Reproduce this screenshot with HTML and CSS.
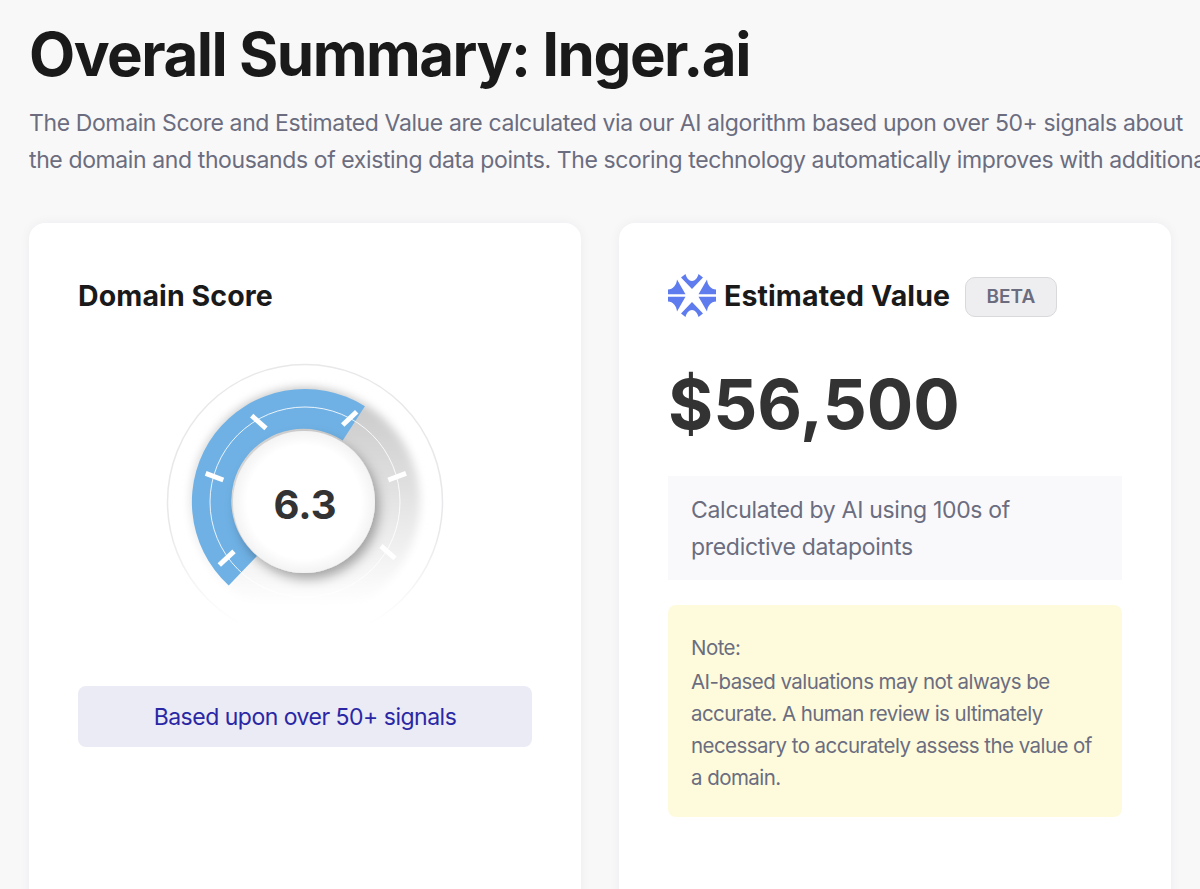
FILE: index.html
```html
<!DOCTYPE html>
<html lang="en">
<head>
    <meta charset="UTF-8">
    <meta name="viewport" content="width=device-width, initial-scale=1.0">
    <title>Overall Summary: Inger.ai</title>
    <link rel="stylesheet" href="styles.css">
</head>
<body>
    <main class="summary">
        <h1>Overall Summary: Inger.ai</h1>
        <p class="intro">The Domain Score and Estimated Value are calculated via our AI algorithm based upon over 50+ signals about<br>the domain and thousands of existing data points. The scoring technology automatically improves with additional data.</p>

        <div class="cards">
            <section class="card">
                <h2>Domain Score</h2>
                <div class="gauge">
                    <svg class="gauge-art" viewBox="0 0 280 280" width="280" height="280">
                        <defs>
                            <linearGradient id="rimFade" x1="0" y1="0" x2="0" y2="1">
                                <stop offset="0.6" stop-color="#e8e8ea"/>
                                <stop offset="0.95" stop-color="#ffffff"/>
                            </linearGradient>
                            <linearGradient id="trackFade" x1="0" y1="0" x2="0" y2="1">
                                <stop offset="0" stop-color="#c6c6c6"/>
                                <stop offset="0.5" stop-color="#e4e4e4"/>
                                <stop offset="0.8" stop-color="#f6f6f6"/>
                                <stop offset="0.95" stop-color="#ffffff"/>
                            </linearGradient>
                            <radialGradient id="discFill">
                                <stop offset="0.8" stop-color="#ffffff"/>
                                <stop offset="1" stop-color="#f3f3f3"/>
                            </radialGradient>
                            <filter id="blurSoft" x="-30%" y="-30%" width="160%" height="160%">
                                <feGaussianBlur stdDeviation="4.5"/>
                            </filter>
                            <filter id="discShadow" x="-30%" y="-30%" width="160%" height="160%">
                                <feDropShadow dx="4" dy="6" stdDeviation="6" flood-color="#000" flood-opacity="0.33"/>
                            </filter>
                        </defs>
                        <circle cx="140" cy="140" r="137.5" fill="none" stroke="url(#rimFade)" stroke-width="1.5"/>
                        <circle cx="140" cy="140" r="115" fill="url(#trackFade)" filter="url(#blurSoft)"/>
                        <path d="M63.7 223.4 A113 113 0 0 1 199.9 44.2 L177.7 78.6 A72 72 0 0 0 92 194 Z" fill="#6fb1e5"/>
                        <circle cx="140" cy="140" r="95" fill="none" stroke="#fff" stroke-opacity="0.85" stroke-width="1"/>
                        <g class="ticks" stroke="#fff" stroke-width="5">
                            <line x1="54.3" y1="203" x2="69" y2="189.3"/>
                            <line x1="40.7" y1="111.3" x2="58.3" y2="118"/>
                            <line x1="86.7" y1="53.7" x2="101" y2="66.3"/>
                            <line x1="177.7" y1="63" x2="191.7" y2="49.7"/>
                            <line x1="223.3" y1="118" x2="241" y2="111.3"/>
                            <line x1="216" y1="184" x2="230" y2="196.3"/>
                        </g>
                        <circle cx="139" cy="140" r="71" fill="url(#discFill)" filter="url(#discShadow)"/>
                    </svg>
                    <span class="gauge-value">6.3</span>
                </div>
                <div class="signals">Based upon over 50+ signals</div>
            </section>

            <section class="card">
                <div class="value-head">
                    <svg class="logo" viewBox="0 0 48 45" width="48" height="45" fill="#5f7cee">
                        <path d="M13 4.5 L17.5 1 C18.5 5 21 8 24 8 C27 8 29.5 5 30.5 1 L35 4.5 L24 16 Z"/>
                        <path d="M13 40.5 L17.5 44 C18.5 40 21 37 24 37 C27 37 29.5 40 30.5 44 L35 40.5 L24 29 Z"/>
                        <path d="M9 6.5 L17.5 21.2 L0 21.2 L0 16.5 C5 16.5 8.5 12 9 6.5 Z"/>
                        <path d="M39 6.5 L30.5 21.2 L48 21.2 L48 16.5 C43 16.5 39.5 12 39 6.5 Z"/>
                        <path d="M9 38.5 L17.5 23.8 L0 23.8 L0 28.5 C5 28.5 8.5 33 9 38.5 Z"/>
                        <path d="M39 38.5 L30.5 23.8 L48 23.8 L48 28.5 C43 28.5 39.5 33 39 38.5 Z"/>
                    </svg>
                    <h2>Estimated Value</h2>
                    <span class="beta">BETA</span>
                </div>
                <div class="price">$56,500</div>
                <div class="calc">Calculated by AI using 100s of predictive datapoints</div>
                <div class="note">
                    <div class="note-label">Note:</div>
                    AI-based valuations may not always be accurate. A human review is ultimately necessary to accurately assess the value of a domain.
                </div>
            </section>
        </div>
    </main>
</body>
</html>
```

FILE: styles.css
```css
html, body {
    height: 100%;
}

body {
    margin: 0;
    overflow: hidden;
    background-color: #f8f8f9;
    font-family: 'Inter', 'Liberation Sans', sans-serif;
    color: #6b6d7f;
}

.summary {
    padding: 16px 0 0 29px;
}

h1 {
    margin: 0;
    font-size: 60px;
    line-height: 76px;
    font-weight: 700;
    letter-spacing: -1.5px;
    color: #1a1a1a;
}

.intro {
    margin: 13px 0 0;
    overflow: hidden;
    font-size: 23px;
    line-height: 37px;
    letter-spacing: -0.39px;
    white-space: nowrap;
}

.cards {
    display: grid;
    grid-template-columns: 552px 552px;
    gap: 38px;
    margin-top: 44px;
}

.card {
    height: 700px;
    padding: 49px;
    box-sizing: border-box;
    background-color: #ffffff;
    border-radius: 16px;
    box-shadow: 0 0 12px rgba(40, 40, 60, 0.05);
}

h2 {
    margin: 0;
    padding-top: 1px;
    font-size: 28.5px;
    line-height: 46px;
    font-weight: 700;
    letter-spacing: 0.11px;
    color: #1a1a1a;
}

.gauge {
    position: relative;
    width: 280px;
    height: 280px;
    margin: 43px auto 0;
}

.gauge-art {
    display: block;
}

.gauge-value {
    position: absolute;
    left: 0;
    right: 0;
    top: 118px;
    text-align: center;
    font-size: 40px;
    line-height: 50px;
    font-weight: 700;
    color: #333333;
}

.signals {
    margin-top: 44px;
    padding: 15px 0 13px;
    background-color: #ebebf6;
    border-radius: 8px;
    text-align: center;
    font-size: 23px;
    line-height: 33px;
    letter-spacing: -0.5px;
    color: #2a27a5;
}

.value-head {
    display: flex;
    align-items: center;
}

.logo {
    margin-right: 8px;
}

.beta {
    margin: 2px 0 0 15px;
    padding: 6px 20.5px;
    background-color: #eeeef0;
    border: 1px solid #d9d9dc;
    border-radius: 10px;
    font-size: 19px;
    line-height: 26px;
    font-weight: 600;
    color: #6b6d7f;
}

.price {
    margin-top: 40px;
    font-size: 69px;
    line-height: 90px;
    font-weight: 700;
    color: #333333;
}

.calc {
    margin-top: 27px;
    padding: 16px 23px 14px;
    background-color: #f9f9fb;
    font-size: 23px;
    line-height: 37px;
    letter-spacing: -0.3px;
}

.note {
    margin-top: 25px;
    padding: 27px 23px 23px;
    background-color: #fefbdd;
    border-radius: 8px;
    font-size: 20.5px;
    line-height: 32px;
    letter-spacing: -0.55px;
}

.note-label {
    margin-bottom: 2px;
}
```
